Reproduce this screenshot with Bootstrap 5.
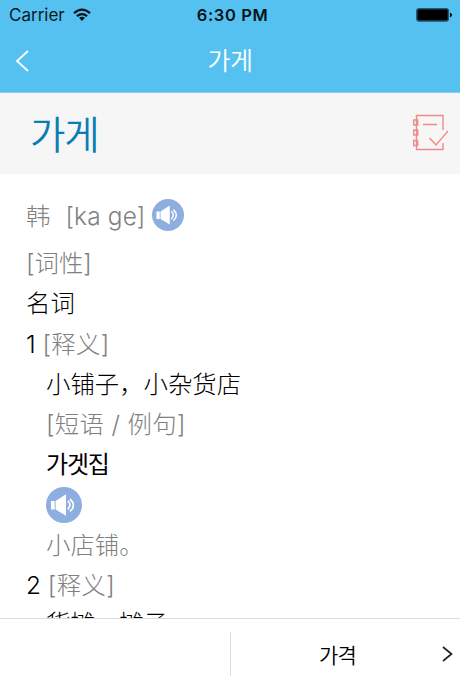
<!DOCTYPE html>
<html lang="zh-CN">
<head>
<meta charset="utf-8">
<meta name="viewport" content="width=device-width, initial-scale=1">
<title>가게</title>
<link href="https://cdn.jsdelivr.net/npm/bootstrap@5.3.0/dist/css/bootstrap.min.css" rel="stylesheet">
<style>
body{font-family:"Inter","Noto Sans CJK SC",sans-serif;color:#000;background:#fff}
.screen{height:690px}
.top-area{background:#55c1f0;height:93px;border-bottom:1px solid #8fcbe6}
.status{height:30px;font-size:17px;line-height:30px;color:#0b1a22;padding:0 8px 0 9px;display:grid;grid-template-columns:1fr auto 1fr}
.carrier{letter-spacing:0}
.clock{font-weight:600;font-size:16.5px;letter-spacing:.6px;color:#06131a;padding-left:4px}
.ko{font-family:"Noto Sans CJK KR",sans-serif}
.titlebar{height:62px;padding:0 15px;display:grid;grid-template-columns:1fr auto 1fr}
.page-title{font-size:25px;line-height:59px;font-weight:350;letter-spacing:-.6px;margin:0}
.word-head{background:#f6f6f6;height:81px;padding:0 12px 0 30px}
.headword{font-size:38.5px;line-height:79px;height:81px;font-weight:350;color:#0a7db5;letter-spacing:-1.200px;margin:0}
.entry{padding:20.5px 26px 0;font-size:24.4px;font-weight:300}
.ln{height:40.25px;line-height:40.25px;white-space:pre}
.pron{height:48.5px;line-height:42px}
.pron .ph{margin-left:15px;letter-spacing:.2px}
.speak{margin:4px 0 0 6px}
.gray{color:#808080}
.sub{padding-left:20px}
.wide{letter-spacing:.35px}
.example{font-weight:400;font-size:24px;letter-spacing:-1.200px;line-height:38px}
.last{line-height:37px}
.latin{font-family:"Inter","Liberation Sans",sans-serif}
.bottom-bar{height:72px;border-top:1px solid #dcdcdc;background:#fff}
.next-cell{border-left:1px solid #dedede;height:44px;margin-top:13px;width:230px;padding-right:7px;display:grid;grid-template-columns:1fr auto 1fr}
.next-word{font-size:21px;font-weight:350;letter-spacing:-.9px;line-height:42px;padding-right:9px}
</style>
<script src="https://cdn.jsdelivr.net/npm/bootstrap@5.3.0/dist/js/bootstrap.bundle.min.js"></script>
</head>
<body>
<svg class="d-none" xmlns="http://www.w3.org/2000/svg">
<symbol id="speaker" viewBox="0 0 36 36"><circle cx="18" cy="18" r="18" fill="#8eaee0"/><path d="M5 14h3.7v8.5H5zM9.6 14 20 7.3v21.4L9.6 22.5z" fill="#fff"/><path d="M21.8 13.8q4.3 4.2 0 8.6M24 12q6.800 6.200 0 12.400" fill="none" stroke="#fff" stroke-width="1.7"/></symbol>
</svg>
<div class="screen d-flex flex-column overflow-hidden">
<header class="top-area flex-shrink-0">
<div class="status">
<div class="d-flex align-items-center"><span class="carrier">Carrier</span>
<svg class="ms-2" width="18" height="14" viewBox="0 0 18 14" fill="none" stroke="#06131a" stroke-width="2.200"><path d="M1 5.200Q9-1.800 17 5.200M3.900 8.200Q9 3.900 14.100 8.200"/><path d="M9 13 6 9.800Q9 7.500 12 9.800z" fill="#06131a" stroke="none"/></svg></div>
<div class="clock">6:30 PM</div>
<div class="d-flex justify-content-end align-items-center"><svg width="36" height="14" viewBox="0 0 36 14"><rect x=".6" y=".6" width="32" height="12.600" rx="2" fill="#1d536b" stroke="#1d536b"/><rect x="1.600" y="1.500" width="30" height="10.800" rx="1"/><path d="M34 4.700q2 .3 2 2.300t-2 2.300z"/></svg></div>
</div>
<nav class="titlebar text-white">
<div class="d-flex align-items-center"><svg width="14" height="22" viewBox="0 0 14 22" fill="none" stroke="#fff" stroke-width="1.800"><path d="M13 1 2 11l11 10"/></svg></div>
<h1 class="page-title ko">가게</h1><div></div>
</nav>
</header>
<section class="word-head d-flex justify-content-between align-items-center flex-shrink-0">
<h2 class="headword ko">가게</h2>
<svg class="mb-1" width="36" height="38" viewBox="0 0 36 38" fill="none" stroke="#f08a8a" stroke-width="1.400"><path d="M31 17V2.500H4.500v34H31V30M11 11.500h14M17.500 25l6.500 7 12-14"/><path d="M1.700 7h4v5h-4zM1.700 17h4v5h-4zM1.700 27.500h4v5h-4z"/></svg>
</section>
<main class="entry flex-grow-1 overflow-hidden">
<div class="ln pron gray d-flex"><span>韩</span><span class="ph latin">[ka ge]</span><svg class="speak" width="32" height="32"><use href="#speaker"/></svg></div>
<div class="ln gray">[词性]</div>
<div class="ln">名词</div>
<div class="ln">1 <span class="gray wide">[释义]</span></div>
<div class="sub">
<div class="ln">小铺子，小杂货店</div>
<div class="ln gray wide">[短语 / 例句]</div>
<div class="ln ko example">가겟집</div>
<div class="ln d-flex align-items-center"><svg width="36" height="36"><use href="#speaker"/></svg></div>
<div class="ln gray">小店铺。</div>
</div>
<div class="ln">2 <span class="gray wide">[释义]</span></div>
<div class="sub"><div class="ln last">货摊，摊子</div></div>
</main>
<footer class="bottom-bar d-flex justify-content-end flex-shrink-0">
<div class="next-cell align-items-center"><div></div><div class="next-word ko">가격</div><div class="d-flex justify-content-end"><svg width="11" height="16" viewBox="0 0 11 16" fill="none" stroke="#222" stroke-width="1.700"><path d="m1 1 8.500 7L1 15"/></svg></div></div>
</footer>
</div>
</body>
</html>
